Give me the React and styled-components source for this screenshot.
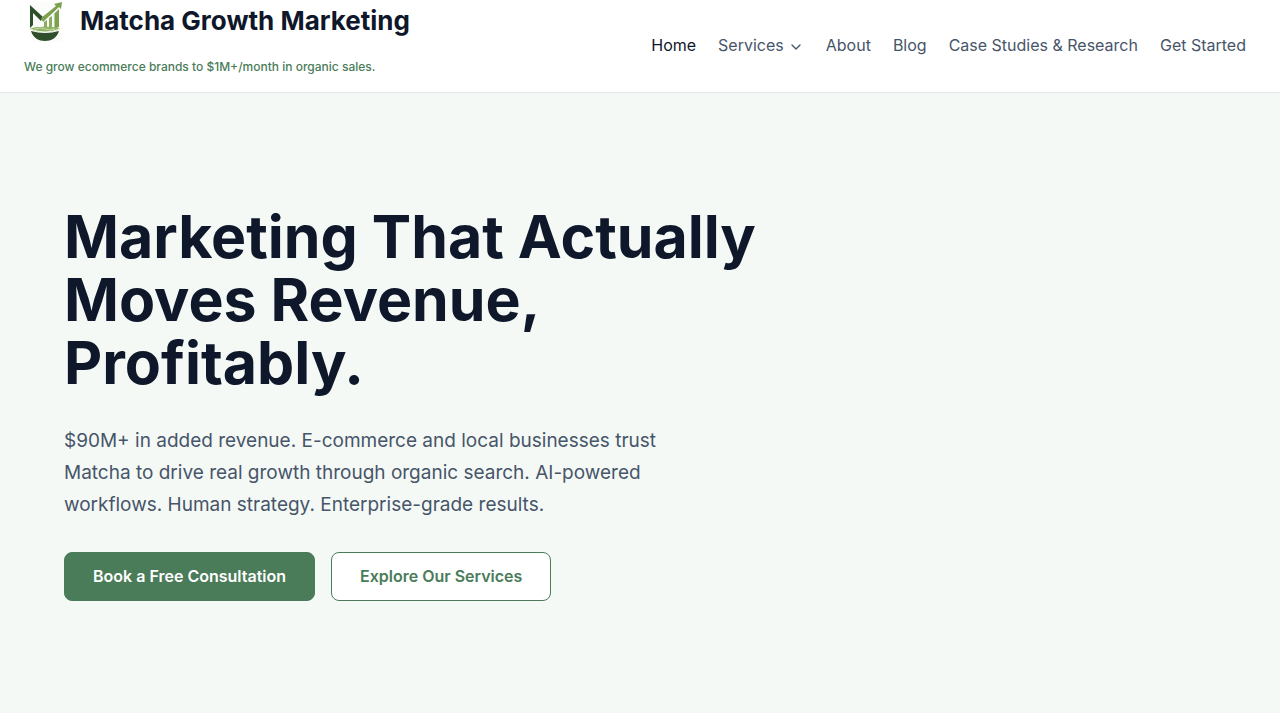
import React from 'react';
import styled, { createGlobalStyle } from 'styled-components';
import { ChevronDown } from 'lucide-react';

const GlobalStyle = createGlobalStyle`
  *, *::before, *::after {
    box-sizing: border-box;
  }

  body {
    margin: 0;
    background: #fff;
    color: #0f172a;
    font-family: Inter, 'Liberation Sans', sans-serif;
    font-size: 16px;
  }

  a {
    color: inherit;
    text-decoration: none;
  }
`;

const Header = styled.header`
  display: flex;
  align-items: center;
  justify-content: space-between;
  padding: 0 24px 15px;
  background: #fff;
  border-bottom: 1px solid #e2e8e5;
`;

const Branding = styled.div`
  display: flex;
  flex-direction: column;
  gap: 15px;
`;

const BrandLink = styled.a`
  display: flex;
  align-items: center;
  gap: 14px;
  color: #0f172a;
  font-size: 26px;
  font-weight: 700;
  line-height: 42px;
`;

const Tagline = styled.p`
  margin: 0;
  color: #4a7c59;
  font-size: 12px;
  font-weight: 500;
  line-height: 20px;
`;

const Nav = styled.nav`
  padding: 13px 10px 0 0;

  & > ul {
    display: flex;
    gap: 22px;
    margin: 0;
    padding: 0;
    list-style: none;
  }
`;

const NavLink = styled.a`
  display: flex;
  align-items: center;
  gap: 4px;
  color: ${({ $active }) => ($active ? '#0f172a' : '#475569')};
  font-size: 16px;
  line-height: 28px;

  & > svg {
    margin-top: 4px;
  }
`;

const Hero = styled.section`
  padding: 112px 64px;
  background: #f4f9f6;
`;

const HeroTitle = styled.h1`
  max-width: 720px;
  margin: 0 0 31px;
  color: #0f172a;
  font-size: 59px;
  font-weight: 700;
  line-height: 63px;
`;

const HeroText = styled.p`
  max-width: 640px;
  margin: 0 0 31px;
  color: #475569;
  font-size: 19px;
  line-height: 32px;
`;

const Actions = styled.div`
  display: flex;
  flex-wrap: wrap;
  gap: 16px;
`;

const ButtonLink = styled.a`
  padding: 12px 28px;
  border: 1px solid #4a7c59;
  border-radius: 8px;
  background: ${({ $outline }) => ($outline ? '#fff' : '#4a7c59')};
  color: ${({ $outline }) => ($outline ? '#4a7c59' : '#fff')};
  font-size: 16px;
  font-weight: 600;
  line-height: 23px;
`;

const navItems = [
  { label: 'Home', active: true },
  { label: 'Services', hasMenu: true },
  { label: 'About' },
  { label: 'Blog' },
  { label: 'Case Studies & Research' },
  { label: 'Get Started' },
];

const Logo = () => (
  <svg width="42" height="42" viewBox="0 0 42 42" aria-hidden="true">
    <rect x="6" y="2" width="32" height="40" fill="#fcfcfb" />
    <path d="M6 5 L19 17 L17 21 L9 13 V25 L6 28 Z" fill="#2f4f2c" />
    <path d="M17 18 L32 6 L30 4 L38 2 L37 9 L35 7 L19 22 Z" fill="#7d9f50" />
    <path d="M20 22 L23 20 V28 H20 Z M25 18 L28 16 V29 H25 Z" fill="#8bab5e" />
    <path d="M30 14 L35 9 V27 L30 29 Z" fill="#7d9f50" />
    <path d="M30 14 V28" stroke="#eef4e6" />
    <path d="M6 29 C8 26 34 26 36 29 C31 33 11 33 6 29 Z" fill="#91b365" />
    <path d="M11 29 Q17 27 21 29 T31 29" fill="none" stroke="#c4d9a9" />
    <path d="M7 31 Q21 35 35 31 C33 38 27 41 21 41 C15 41 9 38 7 31 Z" fill="#2f4f2c" />
    <path d="M6 29 Q21 35 36 29" fill="none" stroke="#edf4e4" />
  </svg>
);

const App = () => (
  <>
    <GlobalStyle />
    <Header>
      <Branding>
        <BrandLink href="#">
          <Logo />
          <span>Matcha Growth Marketing</span>
        </BrandLink>
        <Tagline>We grow ecommerce brands to $1M+/month in organic sales.</Tagline>
      </Branding>
      <Nav aria-label="Primary">
        <ul>
          {navItems.map(({ label, active, hasMenu }) => (
            <li key={label}>
              <NavLink href="#" $active={active} aria-current={active ? 'page' : undefined}>
                {label}
                {hasMenu && <ChevronDown size={16} aria-hidden="true" />}
              </NavLink>
            </li>
          ))}
        </ul>
      </Nav>
    </Header>
    <main>
      <Hero>
        <HeroTitle>Marketing That Actually Moves Revenue, Profitably.</HeroTitle>
        <HeroText>
          $90M+ in added revenue. E-commerce and local businesses trust Matcha to drive real
          growth through organic search. AI-powered workflows. Human strategy. Enterprise-grade
          results.
        </HeroText>
        <Actions>
          <ButtonLink href="#">Book a Free Consultation</ButtonLink>
          <ButtonLink href="#" $outline>Explore Our Services</ButtonLink>
        </Actions>
      </Hero>
    </main>
  </>
);

export default App;
